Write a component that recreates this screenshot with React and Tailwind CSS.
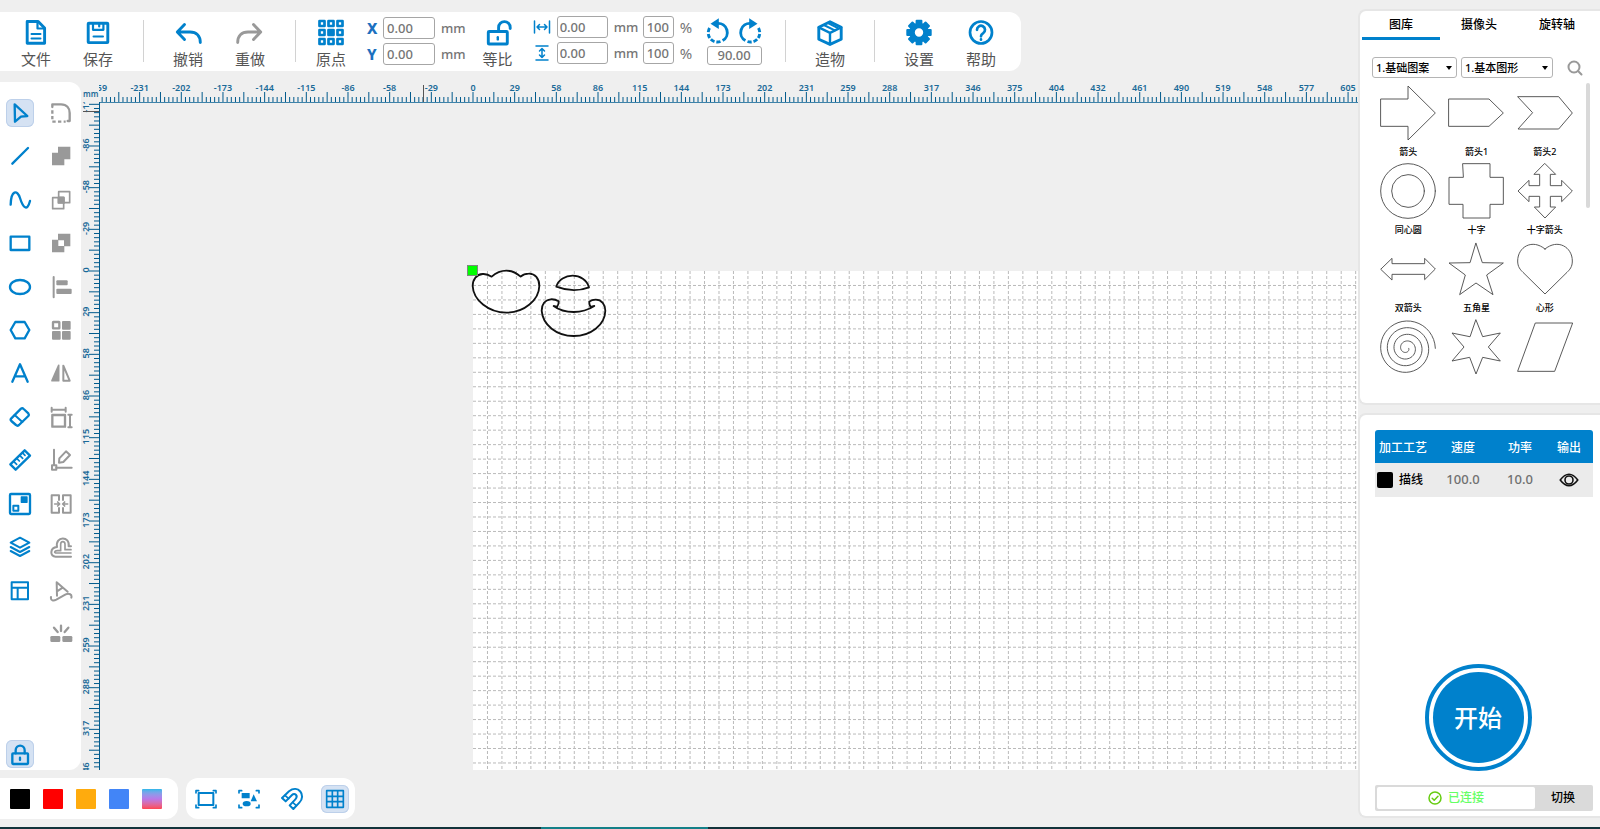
import React, { useLayoutEffect, useRef, useState } from 'react';

const BLUE = '#0081cc';
const GREY = '#999999';

// Workspace geometry, in pixels relative to the workspace's top left corner
const RULER_X = 18;
const RULER_Y = 20;
const ORIGIN_X = 392;
const ORIGIN_Y = 189;
const LABEL_STEP = 41.67;
const LABEL_MM = 28.83;
const GRID_STEP = 14.47;

const range = (from, to) => Array.from({ length: Math.max(0, to - from + 1) }, (_, i) => from + i);

function Icon({ box = 72, className = 'h-6 w-6', color = 'currentColor', width = 6, children }) {
  return (
    <svg
      viewBox={`0 0 ${box} ${box}`}
      className={`shrink-0 ${className}`}
      fill="none"
      stroke={color}
      strokeWidth={width}
      strokeLinejoin="round"
      strokeLinecap="round"
      aria-hidden="true"
    >
      {children}
    </svg>
  );
}

/* ---------- toolbar ---------- */

const gearTeeth = range(0, 7).map(i => i * 45);

const toolbarIcons = {
  file: (
    <>
      <path d="M5.200 3.500h11L22.600 10v15.200H5.200z" />
      <path d="M15.500 4v6.500h6.500" strokeWidth="2.200" />
      <path d="M9.500 16h9M9.500 20.500h9" strokeWidth="2" />
    </>
  ),
  save: (
    <>
      <rect x="4.200" y="5.200" width="19.600" height="19.400" rx="0.6" />
      <path d="M9 5v6.800h10.400V5" strokeWidth="2.200" />
      <path d="M15.200 5v3.400" strokeWidth="2.200" />
      <path d="M9.500 18.600h9.500" strokeWidth="2" />
    </>
  ),
  undo: <path d="M10.500 6.600L3.300 14l7.200 7.400M3.800 14H16c6.400 0 10.300 4 10.300 10.600" />,
  redo: <path d="M17.500 6.600l7.200 7.400-7.200 7.400M24.200 14H12C5.600 14 1.700 18 1.700 24.600" />,
  origin: (
    <>
      {range(0, 8).map(i => (
        <rect
          key={i}
          x={2.5 + (i % 3) * 9}
          y={3 + Math.floor(i / 3) * 9}
          width="5"
          height="5"
          strokeWidth="2.7"
          fill={i === 4 ? BLUE : 'none'}
        />
      ))}
    </>
  ),
  ratio: (
    <>
      <rect x="4.300" y="13.500" width="19" height="12.500" rx="0.8" />
      <path d="M14.600 13V9.400a5.800 5.800 0 0 1 11.600 0v1.200" />
      <path d="M13.800 19.200v2.200" strokeWidth="2.400" />
    </>
  ),
  box: (
    <>
      <path d="M14 3.800l11.200 5.400v12L14 26.400 2.800 21.200v-12z" />
      <path d="M2.800 9.400L14 14.800l11.200-5.400M14 14.800v11.400" strokeWidth="2.400" />
      <path d="M7.800 7l11 5.400M12 5l9.500 4.800" strokeWidth="2" />
    </>
  ),
  gear: (
    <g stroke="none" fill={BLUE}>
      {gearTeeth.map(a => (
        <rect key={a} x="10.600" y="1.800" width="6.800" height="7" rx="1" transform={`rotate(${a} 14 14.500)`} />
      ))}
      <path fillRule="evenodd" d="M14 4.700a9.800 9.800 0 1 1 0 19.600a9.800 9.800 0 1 1 0-19.600zM14 10.300a4.200 4.200 0 1 0 0 8.400a4.200 4.200 0 1 0 0-8.400z" />
    </g>
  ),
  help: (
    <>
      <circle cx="14" cy="14.500" r="11" strokeWidth="2.700" />
      <path d="M10 11.800a4 4 0 1 1 6.200 3.300c-1.600 1-2.200 1.600-2.200 3.200M14 21.400v.3" strokeWidth="2.700" />
    </>
  ),
};

function ToolButton({ icon, label, disabled }) {
  return (
    <button type="button" disabled={disabled} className="flex w-[62px] shrink-0 flex-col items-center gap-[3px] pt-1.5">
      <Icon box={28} className="h-7 w-7" width={2.9} color={disabled ? GREY : BLUE}>
        {toolbarIcons[icon]}
      </Icon>
      <span className="text-[15px] leading-5 text-[#555555]">{label}</span>
    </button>
  );
}

function Separator({ className = 'mx-[13px]' }) {
  return <div className={`mt-2 h-[42px] w-px shrink-0 bg-[#d2d2d2] ${className}`} />;
}

const fieldClass = 'rounded-[3px] border border-[#a6a6a6] bg-white text-[13px] font-medium text-[#757575] outline-none';

function Field({ id, value, label, className }) {
  return <input id={id} aria-label={label} defaultValue={value} className={`h-[22px] ${fieldClass} ${className}`} />;
}

function PositionRow({ axis }) {
  return (
    <div className="flex items-center">
      <label htmlFor={`pos-${axis}`} className="w-4 text-[15px] leading-5 font-extrabold text-[#1c70bf]">{axis}</label>
      <Field id={`pos-${axis}`} value="0.00" label={axis} className="w-[52px] px-[3px]" />
      <span className="ml-1.5 text-[13px] leading-5 font-medium text-[#757575]">mm</span>
    </div>
  );
}

function SizeRow({ name, children }) {
  return (
    <div className="flex items-center">
      <Icon box={18} className="mr-1.5 h-[18px] w-[18px]" width={1.5} color={BLUE}>{children}</Icon>
      <Field value="0.00" label={name} className="w-[51px] px-0.5" />
      <span className="w-[35px] pl-1.5 text-[13px] leading-5 font-medium text-[#757575]">mm</span>
      <Field value="100" label={`${name} %`} className="w-[31px] px-[3px]" />
      <span className="ml-1.5 text-[15px] leading-5 text-[#757575]">%</span>
    </div>
  );
}

function RotateGlyph({ flip }) {
  return (
    <Icon box={26} className="h-[26px] w-[26px]" width={2.9} color={BLUE}>
      <g transform={flip ? 'translate(26 0) scale(-1 1)' : undefined} strokeLinecap="butt">
        <path d="M12.500 5.400A9.200 9.200 0 0 1 17.600 22.600" />
        <path d="M15.500 23.500A9.200 9.200 0 0 1 5 9.400" strokeDasharray="4.200 1.800" />
        <path d="M5.500 5.800L13.800 .2v10.800z" fill={BLUE} stroke="none" />
      </g>
    </Icon>
  );
}

function Toolbar() {
  return (
    <header className="flex h-[59px] shrink-0 self-start rounded-r-xl bg-white pr-[9px] pl-[5px]">
      <ToolButton icon="file" label="文件" />
      <ToolButton icon="save" label="保存" />
      <Separator className="mr-[13px] ml-[14px]" />
      <ToolButton icon="undo" label="撤销" />
      <ToolButton icon="redo" label="重做" disabled />
      <Separator className="mr-1 ml-[14px]" />
      <ToolButton icon="origin" label="原点" />
      <div className="ml-[5px] flex flex-col gap-1 pt-[5px]">
        <PositionRow axis="X" />
        <PositionRow axis="Y" />
      </div>
      <div className="mr-1 ml-px flex">
        <ToolButton icon="ratio" label="等比" />
      </div>
      <div className="flex flex-col gap-1 pt-1">
        <SizeRow name="宽">
          <path d="M1.500 3v12M16.500 3v12M4 9h10M6.500 6.500L4 9l2.500 2.500M11.500 6.500L14 9l-2.500 2.500" />
        </SizeRow>
        <SizeRow name="高">
          <path d="M3 2h12M3 16h12M9 4.500v9M6.500 7L9 4.500 11.500 7M6.500 11L9 13.500l2.500-2.500" />
        </SizeRow>
      </div>
      <div className="ml-[13px] flex flex-col items-center pt-1.5">
        <div className="flex gap-1.5">
          <button type="button" aria-label="逆时针旋转"><RotateGlyph /></button>
          <button type="button" aria-label="顺时针旋转"><RotateGlyph flip /></button>
        </div>
        <input aria-label="旋转角度" defaultValue="90.00" className={`mt-0.5 h-[19px] w-[55px] text-center ${fieldClass}`} />
      </div>
      <div className="ml-[9px] flex">
        <Separator />
        <ToolButton icon="box" label="造物" />
        <Separator />
        <ToolButton icon="gear" label="设置" />
        <ToolButton icon="help" label="帮助" />
      </div>
    </header>
  );
}

/* ---------- side tools ---------- */

const drawTools = [
  { name: '选择', icon: <path d="M20 10L58 45 39 47 21 62z" /> },
  { name: '直线', icon: <path d="M13 59L60 12" /> },
  { name: '曲线', icon: <path d="M8 50C9 6 28 4 36 30S57 74 66 39" /> },
  { name: '矩形', icon: <rect x="8" y="17" width="56" height="40" /> },
  { name: '椭圆', icon: <ellipse cx="36" cy="36" rx="30" ry="21" /> },
  { name: '多边形', icon: <path d="M8 36L22 12H50L64 36 50 61H22z" /> },
  { name: '文本', icon: <path d="M13 62L36 10 59 62M21 46H51" /> },
  {
    name: '橡皮擦',
    icon: (
      <>
        <path d="M10 40L39 11Q43 8 47 12L61 25Q64 29 61 33L33 60Q28 64 24 60L10 48Q6 44 10 40z" />
        <path d="M20 30L43 51" strokeWidth="6" />
      </>
    ),
  },
  {
    name: '测量',
    icon: (
      <>
        <path d="M7 49L50 7 66 23 23 65z" />
        <path d="M17 40l9 9M26 31l8 8M35 22l9 9M43 14l8 8" strokeWidth="5" />
      </>
    ),
  },
  {
    name: '图块',
    icon: (
      <>
        <rect x="6" y="6" width="60" height="60" rx="3" />
        <rect x="38" y="13" width="21" height="20" rx="2" fill={BLUE} stroke="none" />
        <rect x="16" y="41" width="15" height="15" strokeWidth="6" />
      </>
    ),
  },
  { name: '图层', icon: <path d="M36 8L64 23 36 38 8 23zM8 36L36 51 64 36M8 48L36 63 64 48" strokeWidth="6" /> },
  { name: '布局', icon: <path d="M11 10H60V61H11zM11 26H60M29 26V61" strokeWidth="6" /> },
];

const editTools = [
  {
    name: '圆角',
    icon: (
      <>
        <path d="M10 18V10H36C54 10 62 22 62 36V60H56" />
        <path d="M10 28V62H50" strokeDasharray="10 7" strokeLinecap="butt" />
      </>
    ),
  },
  { name: '合并', icon: <path d="M27 8H64V46H46V64H9V26H27z" fill={GREY} stroke="none" /> },
  {
    name: '相交',
    icon: (
      <>
        <path d="M29 11H62V44H29zM11 29H44V62H11z" strokeWidth="5" />
        <path d="M29 29H44V44H29z" fill={GREY} />
      </>
    ),
  },
  { name: '剪除', icon: <path fillRule="evenodd" d="M27 8H64V46H46V64H9V26H27zM28 28V45H45V28z" fill={GREY} stroke="none" /> },
  {
    name: '对齐',
    icon: (
      <>
        <path d="M14 6V67" strokeWidth="6" />
        <rect x="22" y="16" width="34" height="15" rx="3" fill={GREY} stroke="none" />
        <rect x="22" y="41" width="46" height="16" rx="3" fill={GREY} stroke="none" />
      </>
    ),
  },
  {
    name: '阵列',
    icon: (
      <>
        <rect x="12" y="12" width="19" height="19" rx="1" />
        <rect x="39" y="9" width="26" height="26" rx="3" fill={GREY} stroke="none" />
        <rect x="9" y="39" width="26" height="26" rx="3" fill={GREY} stroke="none" />
        <rect x="39" y="39" width="26" height="26" rx="3" fill={GREY} stroke="none" />
      </>
    ),
  },
  {
    name: '镜像',
    icon: (
      <>
        <path d="M29 13V59H9z" fill={GREY} strokeWidth="5" />
        <path d="M43 14V59H62z" strokeWidth="6" />
      </>
    ),
  },
  {
    name: '尺寸',
    icon: (
      <>
        <rect x="10" y="30" width="38" height="35" />
        <path d="M8 14H50M8 8V20M50 8V20M63 29V67M58 29H68M58 67H68" strokeWidth="6" />
      </>
    ),
  },
  {
    name: '编辑节点',
    icon: (
      <>
        <path d="M15 5V50M22 59H68" strokeWidth="6" />
        <rect x="9" y="52" width="13" height="13" strokeWidth="6" />
        <path d="M30 44L31 31 51 10 63 21 43 42z" strokeWidth="6" />
      </>
    ),
  },
  {
    name: '拼接',
    icon: (
      <>
        <path d="M30 24V10H8V62H30V48M42 24V10H65V62H42V48" strokeWidth="6" />
        <path d="M17 36H31M26 30L32 36 26 42M56 36H42M47 30L41 36 47 42" strokeWidth="5" />
      </>
    ),
  },
  {
    name: '偏移',
    icon: (
      <>
        <path d="M66 65H20C2 65 2 38 24 36 18 2 64 2 59 34H66" strokeWidth="6" />
        <path d="M66 54H22C15 54 15 47 25 47H35V28C35 17 48 17 48 28V44H66" strokeWidth="5" />
      </>
    ),
  },
  {
    name: '路径文字',
    icon: (
      <>
        <path d="M24 50L23 10 56 38M24 37L41 26" strokeWidth="6" />
        <path d="M6 54C4 66 14 66 22 62L50 46C60 42 70 46 67 56" strokeWidth="6" />
      </>
    ),
  },
  {
    name: '打散',
    icon: (
      <>
        <rect x="4" y="42" width="30" height="18" rx="4" fill={GREY} stroke="none" />
        <rect x="40" y="42" width="30" height="18" rx="4" fill={GREY} stroke="none" />
        <path d="M36 11V27M15 17L26 30M58 17L47 30" />
      </>
    ),
  },
];

const activeClass = 'bg-[#d5e2f3] ring-1 ring-[#bdd0ea] ring-inset';

function SideButton({ name, active, color, children }) {
  return (
    <button
      type="button"
      aria-label={name}
      title={name}
      className={`flex h-7 w-7 items-center justify-center rounded-md ${active ? activeClass : ''}`}
    >
      <Icon color={color} width={7}>{children}</Icon>
    </button>
  );
}

function SideTools() {
  return (
    <nav className="flex w-[81px] shrink-0 flex-col justify-between rounded-r-xl bg-white pt-[9px] pb-0.5 pl-1.5">
      <div className="flex gap-[13px]">
        <div className="grid h-[565px] grid-rows-13 items-center">
          {drawTools.map((tool, i) => (
            <SideButton key={tool.name} name={tool.name} color={BLUE} active={i === 0}>{tool.icon}</SideButton>
          ))}
        </div>
        <div className="grid h-[565px] grid-rows-13 items-center">
          {editTools.map(tool => (
            <SideButton key={tool.name} name={tool.name} color={GREY}>{tool.icon}</SideButton>
          ))}
        </div>
      </div>
      <SideButton name="锁定" color={BLUE} active>
        <rect x="13" y="34" width="47" height="32" rx="2" />
        <path d="M23 34V25C23 6 50 6 50 25V34M36 47V54" />
      </SideButton>
    </nav>
  );
}

/* ---------- workspace ---------- */

function useSize(ref) {
  const [size, setSize] = useState({ width: 0, height: 0 });

  useLayoutEffect(() => {
    const measure = () => {
      const { width, height } = ref.current.getBoundingClientRect();
      setSize({ width, height });
    };
    measure();
    window.addEventListener('resize', measure);
    return () => window.removeEventListener('resize', measure);
  }, [ref]);

  return size;
}

const tickLength = i => (i % 5 === 0 ? 10 : 5);
const labelFor = i => Math.round(i * LABEL_MM);

// Indexes of the steps that fall between two positions around the origin
const stepsBetween = (from, to, step) => range(Math.ceil(from / step), Math.floor(to / step));

function Workspace() {
  const ref = useRef(null);
  const { width, height } = useSize(ref);

  const right = width - ORIGIN_X;
  const bottom = height - ORIGIN_Y;
  const left = RULER_X - ORIGIN_X;
  const top = RULER_Y - ORIGIN_Y;
  const tick = LABEL_STEP / 10;

  return (
    <div ref={ref} className="min-w-0 flex-1">
      <svg className="h-full w-full" role="img" aria-label="画布">
        {/* sheet and dashed grid */}
        <svg x={ORIGIN_X} y={ORIGIN_Y}>
          <rect width="100%" height="100%" fill="#ffffff" />
          <g stroke="#bababa" strokeWidth="1" strokeDasharray="3 2">
            {stepsBetween(1, right, GRID_STEP).map(i => (
              <line key={i} x1={i * GRID_STEP} x2={i * GRID_STEP} y1="0" y2={bottom} />
            ))}
            {stepsBetween(1, bottom, GRID_STEP).map(i => (
              <line key={i} y1={i * GRID_STEP} y2={i * GRID_STEP} x1="0" x2={right} />
            ))}
          </g>
        </svg>

        {/* bear outline, drawn at three units per pixel */}
        <g transform="translate(359 168) scale(.3333)" fill="none" stroke="#111111" strokeWidth="5.5" strokeLinejoin="round">
          <path d="M155 80Q142 71 128 72C110 73 98 88 98 108C100 150 145 188 199 188C253 188 297 150 298 108C298 86 285 70 266 71Q252 71 242 80Q222 62 199 62Q175 62 155 80z" />
          <path d="M349 110C355 88 377 77 398 77C420 77 441 90 447 112Q400 130 349 110z" />
          <path d="M356 154Q345 147 332 148C315 150 305 163 305 182C308 225 350 258 401 258C452 258 495 225 496 182C496 163 485 149 467 149Q455 149 448 155Q447 165 452 171L463 168Q435 186 401 186Q365 186 341 168L351 171Q357 162 356 154z" />
        </g>
        <rect x={ORIGIN_X - 5.5} y={ORIGIN_Y - 5.5} width="10" height="10" fill="#00ff00" stroke="#7d8a7d" />

        {/* horizontal ruler */}
        <svg x={RULER_X} y="0" height="21">
          <g transform={`translate(${ORIGIN_X - RULER_X} 0)`}>
            {stepsBetween(left, right, tick).map(i => (
              <line key={i} x1={i * tick} x2={i * tick} y1={RULER_Y - tickLength(i)} y2={RULER_Y} stroke="#005a8c" />
            ))}
            {stepsBetween(left - 8, right, LABEL_STEP).map(i => (
              <text key={i} x={i * LABEL_STEP} y="9" textAnchor="middle" fontSize="9" fontWeight="600" fill="#1a6a98">
                {labelFor(i)}
              </text>
            ))}
          </g>
          <line x1="0" x2="100%" y1="20.5" y2="20.5" stroke="#3f83a9" />
          <line x1="324.5" x2="324.5" y1="3" y2="20" stroke="#555555" />
        </svg>

        {/* vertical ruler */}
        <svg x="0" y={RULER_Y} width="19">
          <g transform={`translate(0 ${ORIGIN_Y - RULER_Y})`}>
            {stepsBetween(top, bottom, tick).map(i => (
              <line key={i} y1={i * tick} y2={i * tick} x1={RULER_X - tickLength(i)} x2={RULER_X} stroke="#005a8c" />
            ))}
            {stepsBetween(top, bottom + 8, LABEL_STEP).map(i => (
              <text
                key={i}
                transform={`translate(8 ${i * LABEL_STEP - 1}) rotate(-90)`}
                textAnchor="middle"
                fontSize="9"
                fontWeight="600"
                fill="#1a6a98"
              >
                {labelFor(i)}
              </text>
            ))}
          </g>
          <line x1="18.5" x2="18.5" y1="0" y2="100%" stroke="#005a8c" />
          <line x1="2" x2="18" y1="9.5" y2="9.5" stroke="#555555" />
        </svg>
        <text x="2" y="15" fontSize="8" fontWeight="600" fill="#1a6a98">mm</text>
      </svg>
    </div>
  );
}

/* ---------- bottom bar ---------- */

const layerColors = [
  { name: '黑色', swatch: 'bg-black' },
  { name: '红色', swatch: 'bg-[#ff0000]' },
  { name: '橙色', swatch: 'bg-[#ffab0d]' },
  { name: '蓝色', swatch: 'bg-[#4285f7]' },
  { name: '渐变', swatch: 'bg-linear-to-b from-[#26b8ea] via-[#b878e8] to-[#ff4550]' },
];

const frameCorners = 'M6 18V11H14M58 11H66V18M6 54V62H14M58 62H66V54';

function BottomBar() {
  return (
    <footer className="flex h-[41px] shrink-0 gap-2">
      <div className="flex items-center gap-[13px] rounded-r-xl bg-white pr-4 pl-2.5">
        {layerColors.map(color => (
          <button key={color.name} type="button" aria-label={color.name} className={`h-5 w-5 rounded-[1px] ${color.swatch}`} />
        ))}
      </div>
      <div className="flex items-center gap-[15px] rounded-xl bg-white px-1.5">
        <SideButton name="画框" color={BLUE}>
          <rect x="14" y="18" width="44" height="36" strokeWidth="6" />
          <path d={frameCorners} strokeWidth="5" />
        </SideButton>
        <SideButton name="框选" color={BLUE}>
          <path d={frameCorners} strokeWidth="5" />
          <path d="M14 18H38V34H14zM50 22L60 43H41z" fill={BLUE} stroke="none" />
          <ellipse cx="29" cy="50" rx="12" ry="8" fill={BLUE} stroke="none" />
        </SideButton>
        <SideButton name="吸附" color={BLUE}>
          <path
            d="M6 33L27 13C54 -8 80 24 58 47L40 66 29 55 46 37C56 26 44 16 36 24L17 43z"
            strokeWidth="6"
          />
          <path d="M15 25L26 35M38 46L49 56" strokeWidth="5" />
        </SideButton>
        <SideButton name="网格" color={BLUE} active>
          <path d="M11 11H61V61H11zM11 28H61M11 44H61M28 11V61M44 11V61" strokeWidth="5" />
        </SideButton>
      </div>
    </footer>
  );
}

/* ---------- gallery ---------- */

// Archimedean spiral as a polyline
const spiral = range(0, 160)
  .map(i => {
    const turns = i / 40;
    const r = 7 + 20 * turns;
    const a = -turns * 2 * Math.PI;
    return `${(79 + r * Math.cos(a)).toFixed(1)},${(88 - r * Math.sin(a)).toFixed(1)}`;
  })
  .join(' ');

const gallery = [
  { name: '箭头', shape: <polygon points="3,42 84,42 84,3 166,84 84,165 84,124 3,124" /> },
  { name: '箭头1', shape: <polygon points="3,42 123,42 166,84 123,124 3,124" /> },
  { name: '箭头2', shape: <polygon points="3,35 125,35 166,84 125,132 3,132 46,84" /> },
  {
    name: '同心圆',
    shape: (
      <>
        <circle cx="84" cy="84" r="82" />
        <circle cx="84" cy="84" r="49" />
      </>
    ),
  },
  { name: '十字', shape: <polygon points="45,2 126,2 126,43 166,43 166,124 126,124 126,165 45,165 45,124 3,124 3,43 45,43" /> },
  {
    name: '十字箭头',
    shape: (
      <polygon points="84,2 116,34 100,34 100,68 134,68 134,52 166,84 134,116 134,100 100,100 100,132 116,132 84,165 52,132 68,132 68,100 36,100 36,116 3,84 36,52 36,68 68,68 68,34 52,34" />
    ),
  },
  { name: '双箭头', shape: <polygon points="3,84 36,52 36,68 134,68 134,52 166,84 134,116 134,100 36,100 36,116" /> },
  { name: '五角星', shape: <polygon points="84,7 103,65 166,66 116,102 135,161 84,126 35,161 52,102 3,66 65,65" /> },
  { name: '心形', shape: <path d="M84 24C122 -8 166 18 166 60C166 78 158 86 150 94L84 159 18 94C10 86 2 78 2 60C2 18 46 -8 84 24z" /> },
  { name: '螺旋', shape: <polyline points={spiral} /> },
  { name: '六角星', shape: <polygon points="84,3 104,53 157,42 121,84 157,126 104,115 84,165 65,115 12,126 48,84 12,42 65,53" /> },
  { name: '平行四边形', shape: <polygon points="56,12 167,12 113,157 3,157" /> },
];

const captioned = gallery.length - 3;

function Dropdown({ label, value, className }) {
  return (
    <div className={`relative ${className}`}>
      <select
        aria-label={label}
        defaultValue={value}
        className="block h-[21px] w-full appearance-none rounded-[3px] border border-[#b4b4b4] bg-white pl-[3px] text-[11px] leading-[19px] font-medium text-black outline-none"
      >
        <option>{value}</option>
      </select>
      <span className="pointer-events-none absolute top-[9px] right-[5px] h-0 w-0 border-x-[3px] border-t-4 border-x-transparent border-t-black" />
    </div>
  );
}

function GalleryPanel() {
  const [tab, setTab] = useState('图库');

  return (
    <section className="h-[396px] shrink-0 rounded-l-lg border-2 border-r-0 border-[#e6e6e6] bg-white">
      <div role="tablist" className="flex pl-0.5">
        {['图库', '摄像头', '旋转轴'].map(name => (
          <button
            key={name}
            type="button"
            role="tab"
            aria-selected={tab === name}
            onClick={() => setTab(name)}
            className={`h-[29px] w-[78px] border-b-3 pt-0.5 text-xs font-medium text-black ${tab === name ? 'border-[#0081cc]' : 'border-transparent'}`}
          >
            {name}
          </button>
        ))}
      </div>
      <div className="mt-[17px] flex h-[21px] items-center gap-1 pl-3">
        <Dropdown label="图案分类" value="1.基础图案" className="w-[85px]" />
        <Dropdown label="图形分类" value="1.基本图形" className="w-[92px]" />
        <button type="button" aria-label="搜索" className="ml-2.5">
          <Icon box={16} className="h-4 w-4" width={2} color={GREY}>
            <circle cx="7" cy="7" r="5.500" />
            <path d="M11.300 11.300L14.500 14.500" />
          </Icon>
        </button>
      </div>
      <div className="mt-[5px] flex pl-[14px]">
        <div className="mt-0.5 grid h-[296px] w-[205px] grid-cols-3 content-start">
          {gallery.map((item, i) => (
            <button key={item.name} type="button" aria-label={item.name} className="flex h-[78px] flex-col items-center gap-1">
              <Icon box={168} className="h-14 w-14" width={2.8} color="#4d4d4d">{item.shape}</Icon>
              {i < captioned && (
                <span className="text-[9px] leading-[14px] font-medium text-black">{item.name}</span>
              )}
            </button>
          ))}
        </div>
        <div className="ml-[7px] h-[125px] w-1 rounded-full bg-[#d9d9d9]" />
      </div>
    </section>
  );
}

/* ---------- process panel ---------- */

function ProcessPanel() {
  return (
    <section className="flex min-h-0 flex-1 flex-col justify-between rounded-l-lg border-2 border-r-0 border-[#e6e6e6] bg-white pt-[15px] pr-[7px] pb-[5px] pl-[15px]">
      <table className="w-full table-fixed text-center text-xs">
        <thead className="bg-[#0081cc] text-white">
          <tr className="h-[33px]">
            <th className="w-14 rounded-tl-[3px] pt-0.5 font-medium">加工工艺</th>
            <th className="w-16 pt-0.5 font-medium">速度</th>
            <th className="w-[50px] pt-0.5 font-medium">功率</th>
            <th className="rounded-tr-[3px] pt-0.5 font-medium">输出</th>
          </tr>
        </thead>
        <tbody className="bg-[#ebebeb]">
          <tr className="h-[34px]">
            <td>
              <div className="flex items-center gap-1.5 pl-0.5 font-medium text-black">
                <span className="h-4 w-4 rounded-[2px] bg-black" />
                描线
              </div>
            </td>
            <td className="text-[13px] font-medium text-[#707070]">100.0</td>
            <td className="text-[13px] font-medium text-[#707070]">10.0</td>
            <td>
              <button type="button" aria-label="输出" className="align-middle">
                <Icon box={20} className="h-5 w-5" width={1.6} color="#111111">
                  <path d="M1.200 10Q10-1.500 18.800 10 10 21.500 1.200 10z" />
                  <circle cx="10" cy="10" r="4" />
                </Icon>
              </button>
            </td>
          </tr>
        </tbody>
      </table>
      <div>
        <div className="flex justify-center pr-3">
          <button type="button" className="h-[107px] w-[107px] rounded-full border-4 border-[#0081cc] p-1">
            <span className="flex h-full w-full items-center justify-center rounded-full bg-[#0081cc] text-2xl font-medium text-white">开始</span>
          </button>
        </div>
        <div className="mt-[14px] flex h-[26px] rounded-[2px] bg-[#dadada] p-0.5">
          <div className="flex flex-1 items-center justify-center gap-1.5 rounded-[2px] bg-white text-xs font-medium text-[#66ff66]">
            <Icon box={14} className="h-[14px] w-[14px]" width={1.5} color="#66cc11">
              <circle cx="7" cy="7" r="6" />
              <path d="M4.200 7.200l2 2 3.800-4" />
            </Icon>
            已连接
          </div>
          <button type="button" className="w-[56px] text-xs font-medium text-black">切换</button>
        </div>
      </div>
    </section>
  );
}

export default function App() {
  return (
    <div className="flex h-screen flex-col overflow-hidden bg-[#efefef] font-['Noto_Sans','Noto_Sans_CJK_SC',sans-serif]">
      <div className="flex min-h-0 flex-1">
        <main className="flex min-w-0 flex-1 flex-col pt-3 pb-2">
          <Toolbar />
          <div className="mt-[11px] mb-2 flex min-h-0 flex-1">
            <SideTools />
            <Workspace />
          </div>
          <BottomBar />
        </main>
        <aside className="flex w-[242px] shrink-0 flex-col gap-2 pt-[9px] pb-[9px]">
          <GalleryPanel />
          <ProcessPanel />
        </aside>
      </div>
      <div className="flex h-0.5 shrink-0 bg-[#12333b]">
        <div className="ml-[541px] w-[167px] bg-[#148088]" />
      </div>
    </div>
  );
}
